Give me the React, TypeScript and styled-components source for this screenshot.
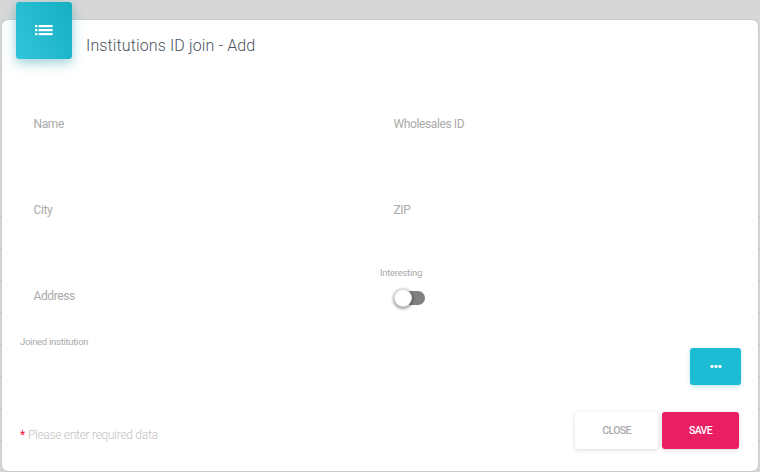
import React from "react";
import styled, { createGlobalStyle } from "styled-components";

const GlobalStyle = createGlobalStyle`
  html, body {
    margin: 0;
    padding: 0;
    height: 100%;
    overflow: hidden;
    background: #d7d7d7;
    font-family: Roboto, "Liberation Sans", sans-serif;
  }
`;

const Backdrop = styled.div`
  width: 760px;
  height: 472px;
  padding: 20px 2px 1px;
  box-sizing: border-box;
  background-image: repeating-linear-gradient(
    to bottom,
    transparent 0,
    transparent 31px,
    #c6c6c6 31px,
    #c6c6c6 32px
  );
  background-size: 100% 272px;
  background-position: 0 185px;
  background-repeat: no-repeat;
`;

const Modal = styled.div`
  position: relative;
  height: 100%;
  background: #fff;
  border-radius: 6px;
  box-shadow: 0 0 2px rgba(0, 0, 0, 0.2);
  display: flex;
  flex-direction: column;
`;

const Header = styled.div`
  display: flex;
  align-items: flex-start;
`;

const IconTile = styled.div`
  width: 56px;
  height: 57px;
  margin: -18px 0 0 14px;
  border-radius: 3px;
  background: linear-gradient(60deg, #31c5d9, #17afc2);
  box-shadow: 0 4px 14px rgba(0, 172, 193, 0.3), 0 4px 8px rgba(0, 0, 0, 0.1);
  display: flex;
  align-items: center;
  justify-content: center;
  color: #fff;
`;

const Title = styled.h4`
  margin: 16px 0 0 14px;
  font-size: 16px;
  line-height: 20px;
  font-weight: 300;
  letter-spacing: 0.12px;
  color: #4a5360;
`;

const Form = styled.div`
  display: grid;
  grid-template-columns: 360px 1fr;
  grid-auto-rows: 86px;
  padding: 0 0 0 31.5px;
  margin-top: 41px;
`;

const Field = styled.div`
  height: 86px;
  padding-top: 16px;
  box-sizing: border-box;
`;

const FieldLabel = styled.label`
  display: block;
  font-size: 12px;
  line-height: 16px;
  letter-spacing: -0.38px;
  color: #aaa;
`;

const SwitchField = styled.div`
  margin: -5px 0 0 -13.5px;
`;

const SmallLabel = styled.div`
  font-size: 9.5px;
  line-height: 12px;
  letter-spacing: -0.28px;
  color: #aaa;
`;

const Track = styled.div`
  position: relative;
  width: 30px;
  height: 14px;
  margin: 12px 0 0 15px;
  border-radius: 7px;
  background: #818181;
`;

const Knob = styled.div`
  position: absolute;
  left: -1px;
  top: -2px;
  width: 18px;
  height: 18px;
  box-sizing: border-box;
  border-radius: 50%;
  background: #fff;
  border: 1px solid rgba(0, 0, 0, 0.1);
  box-shadow: 0 1px 3px 1px rgba(0, 0, 0, 0.4);
`;

const JoinedRow = styled.div`
  display: flex;
  justify-content: space-between;
  align-items: flex-start;
  padding: 0 17px 0 18px;
  margin-top: -22px;
`;

const DotsButton = styled.button`
  width: 51px;
  height: 37px;
  margin-top: 12px;
  border: 0;
  border-radius: 3px;
  background: #1cbcd4;
  box-shadow: 0 2px 4px rgba(0, 172, 193, 0.25);
  color: #fff;
  display: flex;
  align-items: center;
  justify-content: center;
  padding: 0;
`;

const Footer = styled.div`
  display: flex;
  align-items: flex-start;
  justify-content: space-between;
  margin-top: 27px;
  padding: 0 19px 0 18px;
`;

const Required = styled.div`
  margin-top: 15px;
  font-size: 12px;
  line-height: 16px;
  font-weight: 300;
  letter-spacing: -0.28px;
  color: #c2c2c2;

  span {
    color: #f50f3c;
    font-weight: 400;
    margin-right: 3px;
  }
`;

const Actions = styled.div`
  display: flex;
  gap: 4px;
`;

const ActionButton = styled.button<{ $primary?: boolean }>`
  width: ${(p) => (p.$primary ? "77px" : "83px")};
  height: 37px;
  border: 0;
  border-radius: 3px;
  padding: 0;
  font-family: inherit;
  font-size: 10.5px;
  font-weight: 500;
  letter-spacing: -0.6px;
  background: ${(p) => (p.$primary ? "#e91e63" : "#fff")};
  color: ${(p) => (p.$primary ? "#fff" : "#aaa")};
  box-shadow: 0 1px 4px rgba(0, 0, 0, 0.16);
`;

const ListIcon = () => (
  <svg width="18" height="18" viewBox="0 0 18 18" fill="currentColor">
    <rect x="0" y="3" width="2.4" height="2.2" />
    <rect x="3.6" y="3" width="14" height="2.2" />
    <rect x="0" y="7" width="2.4" height="2.2" />
    <rect x="3.6" y="7" width="14" height="2.2" />
    <rect x="0" y="11" width="2.4" height="2.2" />
    <rect x="3.6" y="11" width="14" height="2.2" />
  </svg>
);

const DotsIcon = () => (
  <svg width="12" height="4" viewBox="0 0 12 4" fill="currentColor">
    <circle cx="2" cy="1.5" r="1.6" />
    <circle cx="6" cy="1.5" r="1.6" />
    <circle cx="10" cy="1.5" r="1.6" />
  </svg>
);

const App = () => (
  <>
    <GlobalStyle />
    <Backdrop>
      <Modal>
        <Header>
          <IconTile>
            <ListIcon />
          </IconTile>
          <Title>Institutions ID join - Add</Title>
        </Header>
        <Form>
          <Field>
            <FieldLabel>Name</FieldLabel>
          </Field>
          <Field>
            <FieldLabel>Wholesales ID</FieldLabel>
          </Field>
          <Field>
            <FieldLabel>City</FieldLabel>
          </Field>
          <Field>
            <FieldLabel>ZIP</FieldLabel>
          </Field>
          <Field>
            <FieldLabel>Address</FieldLabel>
          </Field>
          <SwitchField>
            <SmallLabel>Interesting</SmallLabel>
            <Track>
              <Knob />
            </Track>
          </SwitchField>
        </Form>
        <JoinedRow>
          <SmallLabel>Joined institution</SmallLabel>
          <DotsButton aria-label="Browse">
            <DotsIcon />
          </DotsButton>
        </JoinedRow>
        <Footer>
          <Required>
            <span>*</span>Please enter required data
          </Required>
          <Actions>
            <ActionButton>CLOSE</ActionButton>
            <ActionButton $primary>SAVE</ActionButton>
          </Actions>
        </Footer>
      </Modal>
    </Backdrop>
  </>
);

export default App;
